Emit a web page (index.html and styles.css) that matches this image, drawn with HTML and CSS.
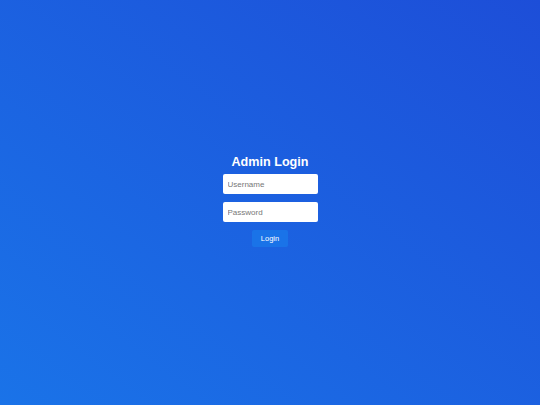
FILE: index.html
```html
<!DOCTYPE html>
<html lang="en">
<head>
<meta charset="utf-8">
<title>Admin Login</title>
<link rel="stylesheet" href="styles.css">
</head>
<body>
<main class="page">
  <form class="login">
    <h1 class="title">Admin Login</h1>
    <input class="field" type="text" placeholder="Username">
    <input class="field" type="password" placeholder="Password">
    <button class="btn" type="button">Login</button>
  </form>
</main>
</body>
</html>
```
FILE: styles.css
```css
html, body {
  margin: 0;
  height: 100%;
}
body {
  font-family: "Liberation Sans", Arial, sans-serif;
  background: linear-gradient(to top right, #1a73e8, #1d4ed8);
}
.page {
  height: 100%;
  display: flex;
  align-items: center;
  justify-content: center;
}
.login {
  display: flex;
  flex-direction: column;
  align-items: center;
  gap: 8px;
  padding-bottom: 5px;
}
.title {
  margin: 0 0 -5px;
  padding-top: 1px;
  font-size: 12.6px;
  line-height: 17px;
  font-weight: 700;
  color: #ffffff;
}
.field {
  box-sizing: border-box;
  width: 95px;
  height: 20px;
  padding: 0 5px;
  border: none;
  border-radius: 2px;
  background: #ffffff;
  font-family: inherit;
  font-size: 8px;
  color: #333;
  outline: none;
}
.field::placeholder {
  color: #777777;
}
.btn {
  box-sizing: border-box;
  width: 36px;
  height: 17px;
  padding: 0;
  border: none;
  border-radius: 2px;
  background: #1a73e8;
  color: #ffffff;
  font-family: inherit;
  font-size: 7.5px;
}
```
